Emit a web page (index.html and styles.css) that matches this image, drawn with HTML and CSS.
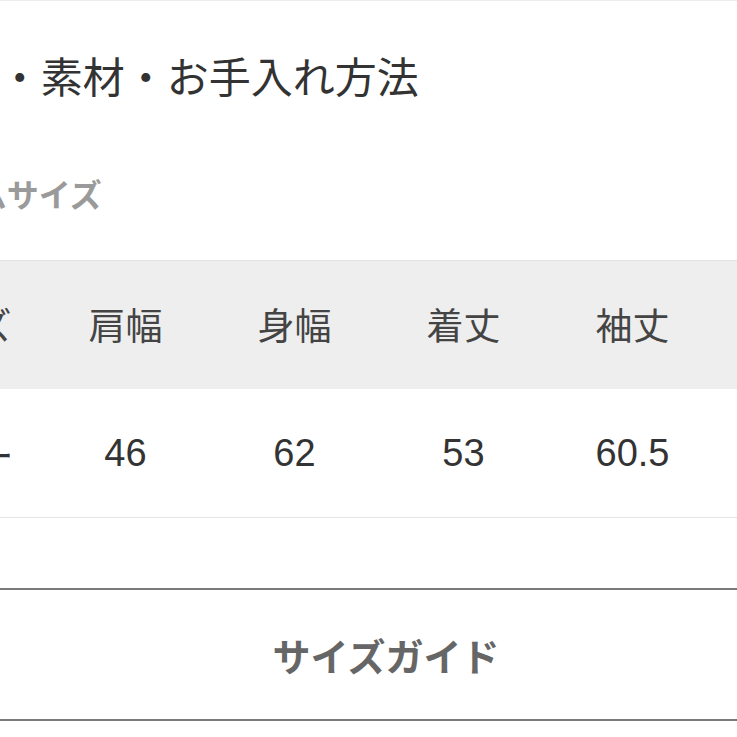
FILE: index.html
```html
<!DOCTYPE html>
<html lang="ja">
<head>
<meta charset="utf-8">
<title>サイズ・素材・お手入れ方法</title>
<link rel="stylesheet" href="styles.css">
</head>
<body>
<div class="page">
  <h2 class="title">サイズ・素材・お手入れ方法</h2>
  <h3 class="sub">アイテムサイズ</h3>
  <div class="size-table">
    <div class="row head">
      <div class="cell">サイズ</div>
      <div class="cell">肩幅</div>
      <div class="cell">身幅</div>
      <div class="cell">着丈</div>
      <div class="cell">袖丈</div>
      <div class="cell"></div>
    </div>
    <div class="row body">
      <div class="cell">フリー</div>
      <div class="cell num">46</div>
      <div class="cell num">62</div>
      <div class="cell num">53</div>
      <div class="cell num">60.5</div>
      <div class="cell"></div>
    </div>
  </div>
  <a class="guide-btn" href="#">サイズガイド</a>
</div>
</body>
</html>
```

FILE: styles.css
```css
html, body {
  margin: 0;
  padding: 0;
  background: #ffffff;
  overflow: hidden;
}

body {
  font-family: "Noto Sans CJK JP", "Noto Sans", sans-serif;
  color: #333333;
}

.page {
  margin-left: -128px;
  width: 1028px;
  border-top: 1px solid #ececec;
}

.title {
  margin: 0;
  padding: 44px 0 0 2px;
  font-size: 42px;
  line-height: 60px;
  font-weight: 400;
  color: #333333;
  white-space: nowrap;
}

.sub {
  margin: 64px 0 0 0;
  padding-left: 10px;
  font-size: 32px;
  line-height: 48px;
  font-weight: 700;
  color: #9a9a9a;
  white-space: nowrap;
}

.size-table {
  margin-top: 43px;
}

.row {
  display: grid;
  grid-template-columns: repeat(5, 169px) 1fr;
  align-items: center;
  box-sizing: border-box;
}

.row.head {
  height: 129px;
  background: #eeeeee;
  border-top: 1px solid #e2e2e2;
  padding-bottom: 3px;
}

.row.body {
  height: 129px;
  border-bottom: 1px solid #e6e6e6;
  background: #ffffff;
}

.cell {
  text-align: center;
  white-space: nowrap;
}

.head .cell {
  font-size: 37px;
  color: #444444;
}

.body .cell {
  font-size: 38px;
  color: #333333;
}

.body .num {
  font-family: "Liberation Sans", Arial, sans-serif;
}

.guide-btn {
  display: flex;
  align-items: center;
  justify-content: center;
  box-sizing: border-box;
  margin-top: 70px;
  height: 133px;
  border: 2px solid #7a7a7a;
  text-decoration: none;
  font-size: 38px;
  font-weight: 700;
  color: #666666;
}
```
